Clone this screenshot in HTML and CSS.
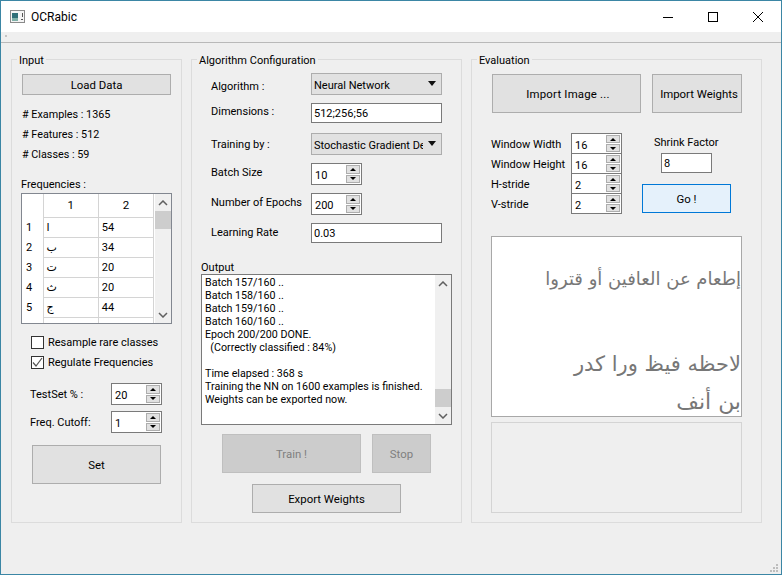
FILE: index.html
```html
<!DOCTYPE html>
<html>
<head>
	<title>OCRabic</title>
	<meta charset="utf-8">
	<link rel="stylesheet" href="styles.css">
</head>
<body>
<div class="window">

	<!-- title bar -->
	<div class="titlebar">
		<svg class="app-icon" width="16" height="14" viewBox="0 0 16 14">
			<rect x="0.5" y="0.5" width="14" height="12" fill="#f4f4f4" stroke="#8a8a8a"/>
			<rect x="2" y="3" width="6" height="8" fill="#2f6f78"/>
			<rect x="2" y="8" width="6" height="3" fill="#7fb0a8"/>
			<rect x="12" y="3" width="1" height="4" fill="#555"/>
			<rect x="11" y="9" width="2" height="1" fill="#555"/>
		</svg>
		<span class="app-name">OCRabic</span>
		<div class="win-controls">
			<svg width="12" height="12" viewBox="0 0 12 12"><path d="M1 6.5h10" stroke="#000" fill="none"/></svg>
			<svg width="12" height="12" viewBox="0 0 12 12"><rect x="1.5" y="1.5" width="9" height="9" stroke="#000" fill="none"/></svg>
			<svg width="12" height="12" viewBox="0 0 12 12"><path d="M1 1l10 10M11 1L1 11" stroke="#000" fill="none"/></svg>
		</div>
	</div>
	<div class="toolbar"><span class="tool-grip"></span></div>

	<div class="main">

		<!-- input -->
		<div class="group group-input">
			<span class="legend">Input</span>
			<button class="btn load-btn">Load Data</button>
			<div class="info first">&#35; Examples : 1365</div>
			<div class="info">&#35; Features : 512</div>
			<div class="info">&#35; Classes : 59</div>
			<div class="freq-label">Frequencies :</div>
			<div class="freq-box">
				<div class="freq-clip">
					<table class="freq-table">
						<tr><th></th><th>1</th><th>2</th></tr>
						<tr><th>1</th><td>ا</td><td>54</td></tr>
						<tr><th>2</th><td>ب</td><td>34</td></tr>
						<tr><th>3</th><td>ت</td><td>20</td></tr>
						<tr><th>4</th><td>ث</td><td>20</td></tr>
						<tr><th>5</th><td>ج</td><td>44</td></tr>
						<tr><th></th><td></td><td>33</td></tr>
					</table>
				</div>
				<div class="scrollbar">
					<span class="sb-arrow"><svg width="10" height="6" viewBox="0 0 10 6"><path d="M1 5l4-4 4 4" stroke="#606060" stroke-width="1.5" fill="none"/></svg></span>
					<span class="sb-thumb"></span>
					<span class="sb-space"></span>
					<span class="sb-arrow"><svg width="10" height="6" viewBox="0 0 10 6"><path d="M1 1l4 4 4-4" stroke="#606060" stroke-width="1.5" fill="none"/></svg></span>
				</div>
			</div>
			<div class="check-row first"><span class="check"></span>Resample rare classes</div>
			<div class="check-row">
				<span class="check">
					<svg width="11" height="11" viewBox="0 0 11 11"><path d="M1 5.5l3 3.5 6-8" stroke="#555" stroke-width="1.2" fill="none"/></svg>
				</span>Regulate Frequencies
			</div>
			<div class="input-row first">
				<label class="input-label">TestSet % :</label>
				<div class="spin"><span class="spin-value">20</span><div class="spin-btns"><span class="spin-up"></span><span class="spin-down"></span></div></div>
			</div>
			<div class="input-row second">
				<label class="input-label">Freq. Cutoff:</label>
				<div class="spin"><span class="spin-value">1</span><div class="spin-btns"><span class="spin-up"></span><span class="spin-down"></span></div></div>
			</div>
			<button class="btn set-btn">Set</button>
		</div>

		<!-- algorithm -->
		<div class="group group-algo">
			<span class="legend">Algorithm Configuration</span>
			<div class="form-row r-algo">
				<label class="form-label down">Algorithm :</label>
				<div class="combo"><span class="combo-text">Neural Network</span><span class="combo-arrow"></span></div>
			</div>
			<div class="form-row r-dim">
				<label class="form-label up">Dimensions :</label>
				<div class="line-edit">512;256;56</div>
			</div>
			<div class="form-row r-train">
				<label class="form-label">Training by :</label>
				<div class="combo"><span class="combo-text">Stochastic Gradient Descent</span><span class="combo-arrow"></span></div>
			</div>
			<div class="form-row r-next">
				<label class="form-label up">Batch Size</label>
				<div class="spin"><span class="spin-value">10</span><div class="spin-btns"><span class="spin-up"></span><span class="spin-down"></span></div></div>
			</div>
			<div class="form-row r-next">
				<label class="form-label up">Number of Epochs</label>
				<div class="spin"><span class="spin-value">200</span><div class="spin-btns"><span class="spin-up"></span><span class="spin-down"></span></div></div>
			</div>
			<div class="form-row r-next">
				<label class="form-label up-less">Learning Rate</label>
				<div class="line-edit">0.03</div>
			</div>
			<div class="output-label">Output</div>
			<div class="output-box">
				<pre class="output-text">Batch 157/160 ..
Batch 158/160 ..
Batch 159/160 ..
Batch 160/160 ..
Epoch 200/200 DONE.
  (Correctly classified : 84%)

Time elapsed : 368 s
Training the NN on 1600 examples is finished.
Weights can be exported now.</pre>
				<div class="scrollbar">
					<span class="sb-arrow"><svg width="10" height="6" viewBox="0 0 10 6"><path d="M1 5l4-4 4 4" stroke="#606060" stroke-width="1.5" fill="none"/></svg></span>
					<span class="sb-space"></span>
					<span class="sb-thumb"></span>
					<span class="sb-arrow"><svg width="10" height="6" viewBox="0 0 10 6"><path d="M1 1l4 4 4-4" stroke="#606060" stroke-width="1.5" fill="none"/></svg></span>
				</div>
			</div>
			<div class="train-row">
				<button class="btn off train-btn">Train !</button>
				<button class="btn off stop-btn">Stop</button>
			</div>
			<button class="btn export-btn">Export Weights</button>
		</div>

		<!-- evaluation -->
		<div class="group group-eval">
			<span class="legend">Evaluation</span>
			<div class="import-row">
				<button class="btn image-btn">Import Image ...</button>
				<button class="btn weights-btn">Import Weights</button>
			</div>
			<div class="eval-params">
				<div class="stride-col">
					<div class="stride-row">
						<label class="stride-label">Window Width</label>
						<div class="spin small"><span class="spin-value">16</span><div class="spin-btns"><span class="spin-up"></span><span class="spin-down"></span></div></div>
					</div>
					<div class="stride-row">
						<label class="stride-label">Window Height</label>
						<div class="spin small"><span class="spin-value">16</span><div class="spin-btns"><span class="spin-up"></span><span class="spin-down"></span></div></div>
					</div>
					<div class="stride-row">
						<label class="stride-label">H-stride</label>
						<div class="spin small"><span class="spin-value">2</span><div class="spin-btns"><span class="spin-up"></span><span class="spin-down"></span></div></div>
					</div>
					<div class="stride-row">
						<label class="stride-label">V-stride</label>
						<div class="spin small"><span class="spin-value">2</span><div class="spin-btns"><span class="spin-up"></span><span class="spin-down"></span></div></div>
					</div>
				</div>
				<div class="shrink-col">
					<div class="shrink-label">Shrink Factor</div>
					<div class="line-edit shrink-edit">8</div>
					<button class="btn go-btn">Go !</button>
				</div>
			</div>
			<div class="picture">
				<div class="hand hand-1">إطعام عن العافين أو قتروا</div>
				<div class="hand hand-2">لاحظه فيظ ورا كدر</div>
				<div class="hand hand-3">بن أنف</div>
			</div>
			<div class="result"></div>
		</div>
	</div>

	<svg class="size-grip" width="9" height="9" viewBox="0 0 9 9" fill="#bdbdbd">
		<rect x="6" y="0" width="2" height="2"/>
		<rect x="3" y="3" width="2" height="2"/><rect x="6" y="3" width="2" height="2"/>
		<rect x="0" y="6" width="2" height="2"/><rect x="3" y="6" width="2" height="2"/><rect x="6" y="6" width="2" height="2"/>
	</svg>
</div>
</body>
</html>
```

FILE: styles.css
```css
* {
	box-sizing: border-box;
}
html, body {
	margin: 0;
	padding: 0;
}
body {
	font-family: Roboto, "DejaVu Sans", sans-serif;
	font-size: 11px;
	color: #000;
}
label {
	white-space: nowrap;
}
.window {
	position: relative;
	width: 782px;
	height: 575px;
	background: #efefef;
	border: 1px solid #3b86a5;
	overflow: hidden;
}

/* title bar */
.titlebar {
	display: flex;
	align-items: center;
	height: 31px;
	padding-left: 9px;
	background: #fff;
}
.app-icon {
	margin-right: 5px;
}
.app-name {
	font-size: 12px;
}
.win-controls {
	display: flex;
	gap: 33px;
	margin-left: auto;
	margin-right: 17px;
}
.win-controls svg {
	display: block;
}
.toolbar {
	height: 11px;
	border-bottom: 1px solid #b9b9b9;
	padding: 3px 0 0 4px;
}
.tool-grip {
	display: block;
	width: 2px;
	height: 2px;
	background: #c4c4c4;
}

.main {
	display: flex;
	align-items: flex-start;
	gap: 9px;
	padding: 16px 0 0 10px;
}
.group {
	position: relative;
	height: 464px;
	border: 1px solid #dcdcdc;
}
.legend {
	position: absolute;
	top: -6px;
	left: 5px;
	padding: 0 2px;
	line-height: 14px;
	background: #efefef;
}
.group-input {
	width: 171px;
}
.group-algo {
	width: 271px;
}
.group-eval {
	width: 291px;
}

/* widgets */
.btn {
	display: block;
	padding: 1px 0 0;
	font: inherit;
	font-size: 11.4px;
	color: #000;
	background: #e1e1e1;
	border: 1px solid #adadad;
}
.btn.off {
	color: #7f7f7f;
	background: #ccc;
	border-color: #bfbfbf;
}
.line-edit {
	width: 131px;
	height: 20px;
	padding-left: 2px;
	line-height: 19px;
	background: #fff;
	border: 1px solid #7a7a7a;
}
.combo {
	display: flex;
	align-items: center;
	width: 131px;
	height: 22px;
	padding: 0 5px 0 2px;
	background: #e1e1e1;
	border: 1px solid #adadad;
}
.combo-text {
	flex: 1;
	overflow: hidden;
	white-space: nowrap;
	margin-right: 5px;
	padding-top: 2px;
}
.combo-arrow {
	flex: none;
	border-left: 4.5px solid transparent;
	border-right: 4.5px solid transparent;
	border-top: 5px solid #111;
	margin-top: -2px;
}
.spin {
	display: flex;
	justify-content: space-between;
	width: 51px;
	height: 22px;
	padding: 1px;
	background: #fff;
	border: 1px solid #7a7a7a;
}
.spin.small {
	height: 21px;
	margin-top: -1px;
}
.spin-value {
	padding: 2px 0 0 2px;
	line-height: 17px;
}
.spin-btns {
	display: flex;
	flex-direction: column;
	gap: 1px;
	width: 14px;
}
.spin-up, .spin-down {
	flex: 1;
	display: flex;
	align-items: center;
	justify-content: center;
	background: #e1e1e1;
	border: 1px solid #adadad;
}
.spin-up::after, .spin-down::after {
	content: "";
	border-left: 3px solid transparent;
	border-right: 3px solid transparent;
}
.spin-up::after {
	border-bottom: 3px solid #000;
}
.spin-down::after {
	border-top: 3px solid #000;
}
.scrollbar {
	display: flex;
	flex-direction: column;
	flex: none;
	width: 16px;
	background: #f0f0f0;
}
.sb-arrow {
	display: flex;
	align-items: center;
	justify-content: center;
	height: 17px;
}
.sb-arrow svg {
	display: block;
}
.sb-thumb {
	height: 18px;
	background: #cdcdcd;
}
.sb-space {
	flex: 1;
}

/* input group */
.load-btn {
	width: 149px;
	height: 21px;
	margin: 14px 0 0 10px;
}
.info {
	height: 20px;
	padding-left: 10px;
	font-size: 10.8px;
	line-height: 22px;
}
.info.first {
	margin-top: 9px;
}
.freq-label {
	height: 19px;
	margin-top: 10px;
	padding-left: 9px;
	line-height: 22px;
}
.freq-box {
	display: flex;
	justify-content: space-between;
	width: 151px;
	height: 131px;
	margin-left: 9px;
	background: #fff;
	border: 1px solid #828790;
}
.freq-clip {
	width: 132px;
	overflow: hidden;
}
.freq-table {
	border-collapse: collapse;
	table-layout: fixed;
	width: 132px;
}
.freq-table th, .freq-table td {
	padding: 1px 0 0;
	font-weight: normal;
	height: 20px;
	line-height: 16px;
	border: 1px solid #d4d4d4;
}
.freq-table tr:first-child th {
	height: 23px;
	padding-top: 0;
	font-size: 11.5px;
	text-align: center;
	border-top: none;
	border-bottom: none;
}
.freq-table th:first-child {
	width: 21px;
	border-left: none;
	border-top: none;
	border-bottom: none;
	text-align: left;
	padding-left: 4px;
}
.freq-table td {
	width: 55px;
	padding-left: 3px;
}
.check-row {
	display: flex;
	align-items: center;
	height: 20px;
	padding-left: 19px;
}
.check-row.first {
	margin-top: 8px;
}
.check {
	display: flex;
	align-items: center;
	justify-content: center;
	width: 13px;
	height: 13px;
	margin-right: 4px;
	background: #fff;
	border: 1px solid #333;
}
.input-row {
	display: flex;
	align-items: center;
	padding-left: 18px;
}
.input-row.first {
	margin-top: 11px;
}
.input-row.second {
	margin-top: 6px;
}
.input-label {
	width: 81px;
}
.set-btn {
	width: 129px;
	height: 39px;
	margin: 12px 0 0 20px;
}

/* algorithm group */
.form-row {
	display: flex;
	align-items: center;
	padding-left: 19px;
}
.form-label {
	width: 100px;
}
.form-label.down {
	margin-top: 5px;
}
.form-label.up {
	margin-top: -4px;
}
.form-label.up-less {
	margin-top: -2px;
}
.r-algo {
	margin-top: 13px;
}
.r-dim {
	margin-top: 8px;
}
.r-train {
	margin-top: 10px;
}
.r-next {
	margin-top: 8px;
}
.output-label {
	height: 14px;
	margin: 17px 0 0 9px;
	line-height: 16px;
}
.output-box {
	display: flex;
	justify-content: space-between;
	width: 251px;
	height: 151px;
	margin-left: 9px;
	background: #fff;
	border: 1px solid #7a7a7a;
}
.output-text {
	margin: 0;
	padding: 1px 0 0 3px;
	font: inherit;
	font-size: 10.7px;
	line-height: 13px;
	white-space: pre;
}
.train-row {
	display: flex;
	gap: 11px;
	margin: 9px 0 0 30px;
}
.train-btn {
	width: 139px;
	height: 39px;
}
.stop-btn {
	width: 59px;
	height: 39px;
}
.export-btn {
	width: 149px;
	height: 29px;
	margin: 11px 0 0 60px;
}

/* evaluation group */
.import-row {
	display: flex;
	gap: 11px;
	margin: 14px 0 0 20px;
}
.image-btn {
	width: 149px;
	height: 39px;
	letter-spacing: 0.2px;
	padding-left: 3px;
}
.weights-btn {
	width: 90px;
	height: 39px;
	padding-left: 4px;
	white-space: nowrap;
}
.eval-params {
	display: flex;
	margin: 21px 0 0 19px;
}
.stride-col {
	width: 151px;
}
.stride-row {
	display: flex;
	align-items: center;
}
.stride-label {
	width: 80px;
}
.shrink-label {
	height: 19px;
	padding-left: 12px;
	line-height: 18px;
}
.shrink-edit {
	width: 51px;
	margin-left: 19px;
}
.go-btn {
	width: 89px;
	height: 29px;
	margin-top: 11px;
	background: #e5f1fb;
	border-color: #0078d7;
}
.picture {
	width: 251px;
	height: 181px;
	margin: 22px 0 0 19px;
	overflow: hidden;
	background: #fff;
	border: 1px solid #a8a8a8;
}
.hand {
	direction: rtl;
	white-space: nowrap;
	font-family: "DejaVu Sans", sans-serif;
	color: #777;
	line-height: 24px;
}
.hand-1 {
	margin-top: 30px;
	font-size: 18px;
}
.hand-2 {
	margin-top: 61px;
	font-size: 21px;
}
.hand-3 {
	margin-top: 14px;
	font-size: 22px;
}
.result {
	width: 251px;
	height: 91px;
	margin: 5px 0 0 19px;
	border: 1px solid #d4d4d4;
}

/* sits on the window corner */
.size-grip {
	position: absolute;
	right: 2px;
	bottom: 1px;
}
```
